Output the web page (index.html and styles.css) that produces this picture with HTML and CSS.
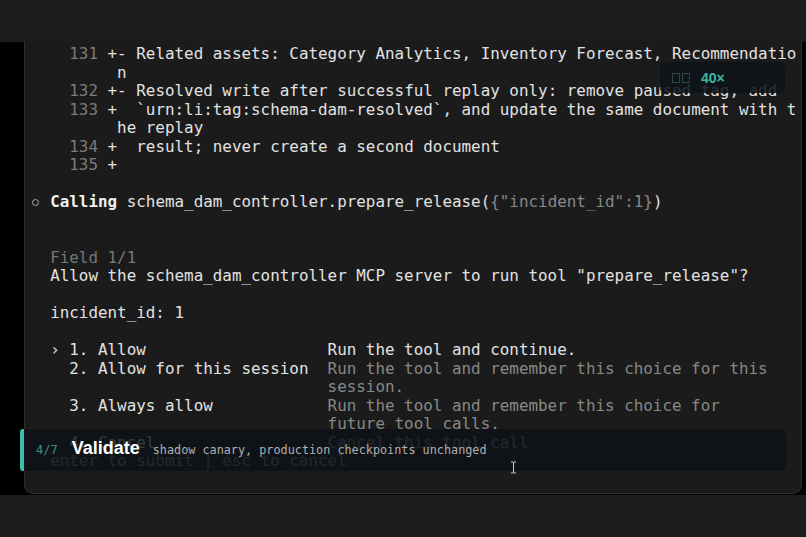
FILE: index.html
```html
<!DOCTYPE html>
<html lang="en">
<head>
<meta charset="utf-8">
<title>Terminal</title>
<link rel="stylesheet" href="styles.css">
</head>
<body>
<div class="topbar"></div>
<div class="stage">
  <div class="panel">
    <div class="term">
<div class="ln"><span class="num">    131</span> +- Related assets: Category Analytics, Inventory Forecast, Recommendatio</div>
<div class="ln">         n</div>
<div class="ln"><span class="num">    132</span> +- Resolved write after successful replay only: remove paused tag, add</div>
<div class="ln"><span class="num">    133</span> +  `urn:li:tag:schema-dam-resolved`, and update the same document with t</div>
<div class="ln">         he replay</div>
<div class="ln"><span class="num">    134</span> +  result; never create a second document</div>
<div class="ln"><span class="num">    135</span> +</div>
<div class="ln"> </div>
<div class="ln"><span class="dot"></span> <b class="strong">Calling</b> schema_dam_controller.prepare_release(<span class="dim">{"incident_id":1}</span>)</div>
<div class="ln"> </div>
<div class="ln"> </div>
<div class="ln faint">  Field 1/1</div>
<div class="ln">  Allow the schema_dam_controller MCP server to run tool "prepare_release"?</div>
<div class="ln"> </div>
<div class="ln">  incident_id: 1</div>
<div class="ln"> </div>
<div class="ln">  › 1. Allow                   Run the tool and continue.</div>
<div class="ln">    2. Allow for this session  <span class="dim">Run the tool and remember this choice for this</span></div>
<div class="ln">                               <span class="dim">session.</span></div>
<div class="ln">    3. Always allow            <span class="dim">Run the tool and remember this choice for</span></div>
<div class="ln">                               <span class="dim">future tool calls.</span></div>
<div class="ln">    4. Cancel                  <span class="dim">Cancel this tool call</span></div>
<div class="ln dim">  enter to submit | esc to cancel</div>
    </div>
  </div>

  <div class="badge">
    <svg class="badge-icon" width="19" height="11" viewBox="0 0 19 11">
      <rect x="0.5" y="1.5" width="7" height="9" fill="none" stroke="#2c4948" stroke-width="1"/>
      <rect x="10.5" y="1.5" width="7" height="9" fill="none" stroke="#2c4948" stroke-width="1"/>
    </svg>
    <span class="badge-count">40×</span>
  </div>

  <div class="toast">
    <span class="toast-step">4/7</span>
    <span class="toast-title">Validate</span>
    <span class="toast-desc">shadow canary, production checkpoints unchanged</span>
  </div>

  <svg class="ibeam" width="7" height="13" viewBox="0 0 7 13">
    <path d="M1 1h2l0.5 0.6L4 1h2M3.5 1.6v9.8M1 12h2l0.5-0.6L4 12h2" fill="none" stroke="#cfcfcf" stroke-width="1"/>
  </svg>
</div>
</body>
</html>
```

FILE: styles.css
```css
* { box-sizing: border-box; }

html, body {
  margin: 0;
  padding: 0;
  background: #1c1c1c;
  width: 806px;
  height: 537px;
  overflow: hidden;
}

.topbar {
  height: 42px;
}

.stage {
  position: relative;
  height: 453px;
  background: #000;
  display: flex;
  padding: 0 4px 1px 24px;
}

.panel {
  flex: 1;
  background: #1b1b1b;
  border: 1px solid #2f2f2f;
  border-top: none;
  border-radius: 0 0 9px 9px;
  padding: 3px 0 0 6px;
  overflow: hidden;
}

.term {
  font-family: "DejaVu Sans Mono", "Liberation Mono", monospace;
  font-size: 15.9px;
  line-height: 18.5px;
  color: #e2e2e2;
}

.ln {
  white-space: pre;
  height: 18.5px;
}

.num { color: #7c7c7c; }
.dim { color: #888888; }
.faint { color: #777777; }
.strong { font-weight: bold; color: #f0f0f0; }

.dot {
  display: inline-block;
  width: 7px;
  height: 7px;
  margin: 0 1.25px 0 1.3px;
  border: 1.2px solid #a8a8a8;
  border-radius: 50%;
  vertical-align: 1px;
}

.badge {
  position: absolute;
  left: 660px;
  top: 20px;
  width: 125px;
  height: 31px;
  background: rgba(14, 19, 25, 0.88);
  border-radius: 5px;
  display: flex;
  align-items: center;
  gap: 10px;
  padding-left: 12px;
}

.badge-icon { display: block; }

.badge-count {
  font-family: "Liberation Sans", Arial, sans-serif;
  font-weight: bold;
  font-size: 14px;
  color: #3cb9a4;
}

.toast {
  position: absolute;
  left: 20px;
  top: 387px;
  width: 766px;
  height: 42px;
  background: rgba(13, 18, 24, 0.82);
  border-left: 4px solid #3bbfa6;
  border-radius: 3px 7px 7px 3px;
  display: flex;
  align-items: baseline;
  padding: 9px 0 0 12px;
}

.toast-step {
  font-family: "DejaVu Sans Mono", "Liberation Mono", monospace;
  font-size: 12px;
  color: #3e8f87;
  margin-right: 14px;
}

.toast-title {
  font-family: "Liberation Sans", Arial, sans-serif;
  font-weight: bold;
  font-size: 18px;
  color: #ffffff;
  margin-right: 13px;
}

.toast-desc {
  font-family: "DejaVu Sans Mono", "Liberation Mono", monospace;
  font-size: 11.8px;
  color: #b0b0b0;
}

.ibeam {
  position: absolute;
  left: 510px;
  top: 419px;
  display: block;
}
```
